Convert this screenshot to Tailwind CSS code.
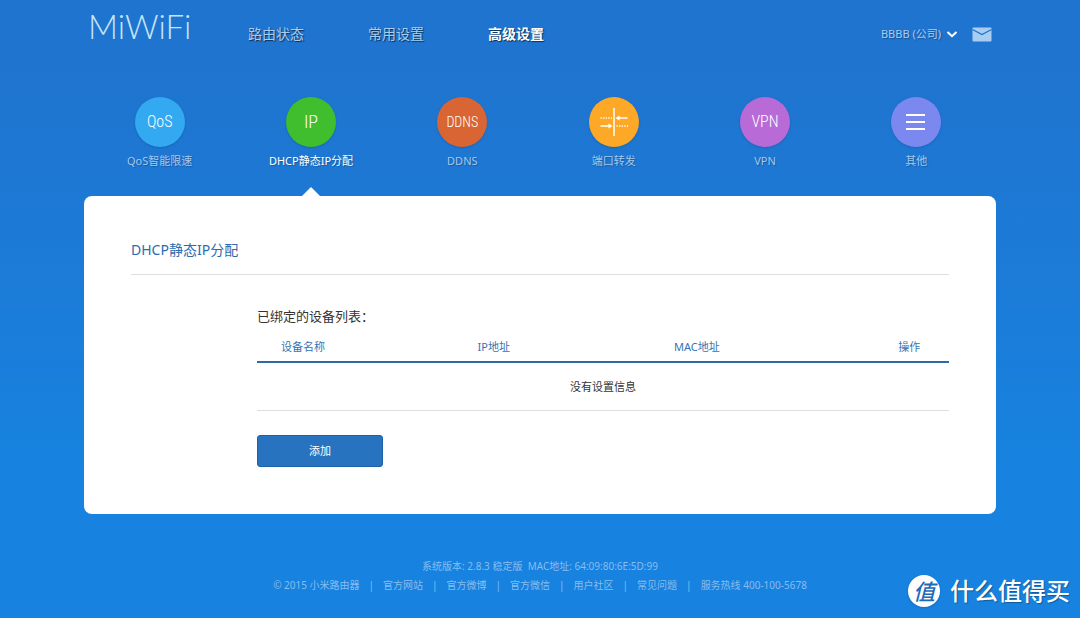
<!DOCTYPE html>
<html lang="zh-CN">
<head>
<meta charset="utf-8">
<meta name="viewport" content="width=device-width, initial-scale=1">
<title>MiWiFi</title>
<script src="https://cdn.jsdelivr.net/npm/@tailwindcss/browser@4"></script>
</head>
<body class="relative min-h-screen bg-linear-to-b from-[#1f74cf] from-10% to-[#1782df] to-75% font-['Noto_Sans','Noto_Sans_CJK_SC',sans-serif] text-[11px] text-[#333]">
<div class="mx-auto w-full max-w-[912px]">
  <header class="flex h-[70px] items-center justify-between px-1 pb-0.5">
    <div class="flex items-center">
      <a href="#" aria-label="MiWiFi" class="-mt-4 w-40 font-['Lato','Inter',sans-serif] text-[33px] leading-none font-light text-[#c4e6f8]">MiWiFi</a>
      <nav class="flex gap-16 text-sm text-[#a9cdf1] text-shadow-[1px_1px_1px_rgb(0_0_0/0.6)]">
        <a href="#">路由状态</a>
        <a href="#">常用设置</a>
        <a href="#" class="font-bold text-white">高级设置</a>
      </nav>
    </div>
    <div class="flex items-center gap-3.5">
      <button type="button" class="flex items-center gap-[5px] text-[#a9cdf1] text-shadow-[1px_1px_1px_rgb(0_0_0/0.3)]">
        BBBB (公司)
        <svg class="size-3" viewBox="0 0 12 12" fill="none" stroke="#fff" stroke-width="2"><path d="M1.500 4 6 8.200 10.500 4"/></svg>
      </button>
      <a href="#" aria-label="消息">
        <svg class="h-[15px] w-5" viewBox="0 0 20 15"><path fill="#a9cdf1" d="M.5 1.500Q.5.500 1.500.500h17Q19.500.500 19.500 1.500v12q0 1-1 1h-17q-1 0-1-1z"/><path fill="none" stroke="#1f74cf" stroke-width="1.300" d="M.5 2.500 10 7.500l9.500-5"/></svg>
      </a>
    </div>
  </header>

  <nav class="grid h-[126px] grid-cols-6 pt-[27px] pr-1 text-center text-[#a3c8ee] text-shadow-[1px_1px_1px_rgb(0_0_0/0.25)]">
    <a href="#" class="flex flex-col items-center gap-1.5">
      <span class="flex size-[50px] items-center justify-center rounded-full bg-[#32a9f0] font-['Roboto_Condensed','Open_Sans_Condensed','Liberation_Sans_Narrow',sans-serif] text-base font-light text-white shadow-sm text-shadow-none">QoS</span>
      <span>QoS智能限速</span>
    </a>
    <a href="#" aria-current="page" class="relative flex flex-col items-center gap-1.5 text-white">
      <span class="flex size-[50px] items-center justify-center rounded-full bg-[#40be2d] font-['Roboto_Condensed','Open_Sans_Condensed','Liberation_Sans_Narrow',sans-serif] text-lg font-light text-white shadow-sm text-shadow-none">IP</span>
      <span>DHCP静态IP分配</span>
      <svg class="absolute bottom-0 left-1/2 h-[9px] w-[18px] -translate-x-1/2" viewBox="0 0 18 9" fill="#fff"><path d="M0 9 9 0l9 9z"/></svg>
    </a>
    <a href="#" class="flex flex-col items-center gap-1.5">
      <span class="flex size-[50px] items-center justify-center rounded-full bg-[#d86533] font-['Roboto_Condensed','Open_Sans_Condensed','Liberation_Sans_Narrow',sans-serif] text-sm font-light text-white shadow-sm text-shadow-none">DDNS</span>
      <span>DDNS</span>
    </a>
    <a href="#" class="flex flex-col items-center gap-1.5">
      <span class="flex size-[50px] items-center justify-center rounded-full bg-[#fea827] shadow-sm">
        <svg class="size-[30px]" viewBox="0 0 30 30" fill="none" stroke="#fff" stroke-width="1.300">
          <path d="M15 1v28" stroke-width="1.500"/>
          <path d="M1.500 11H13M17.500 19H29" stroke-dasharray="1.300 1.300"/>
          <path d="M19 11h9.500M1.500 19H11"/>
          <path d="M16.500 11l4-2.500v5zM13.500 19l-4-2.500v5z" fill="#fff" stroke="none"/>
        </svg>
      </span>
      <span>端口转发</span>
    </a>
    <a href="#" class="flex flex-col items-center gap-1.5">
      <span class="flex size-[50px] items-center justify-center rounded-full bg-[#b86ad6] font-['Roboto_Condensed','Open_Sans_Condensed','Liberation_Sans_Narrow',sans-serif] text-base font-light text-white shadow-sm text-shadow-none">VPN</span>
      <span>VPN</span>
    </a>
    <a href="#" class="flex flex-col items-center gap-1.5">
      <span class="flex size-[50px] items-center justify-center rounded-full bg-[#7b88f0] shadow-sm">
        <svg class="size-5" viewBox="0 0 20 20" stroke="#fff" stroke-width="2"><path d="M0 3h19M0 10h19M0 17h19"/></svg>
      </span>
      <span>其他</span>
    </a>
  </nav>

  <main class="rounded-lg bg-white px-[47px] pt-[42px] pb-[47px]">
    <h1 class="border-b border-[#ddd] pb-3 text-sm leading-6 text-[#2a6cb0]">DHCP静态IP分配</h1>
    <section class="pt-[31px] pl-[126px]">
      <h2 class="text-[13px] leading-5">已绑定的设备列表：</h2>
      <table class="w-full table-fixed border-collapse text-left">
        <thead>
          <tr class="h-9 border-b-2 border-[#2b6ba8] text-[#3673b3]">
            <th class="w-[28.400%] pt-2 pl-6 font-normal">设备名称</th>
            <th class="w-[28.400%] pt-2 pl-6 font-normal">IP地址</th>
            <th class="w-[32.400%] pt-2 pl-6 font-normal">MAC地址</th>
            <th class="pt-2 pl-6 font-normal">操作</th>
          </tr>
        </thead>
        <tbody>
          <tr class="h-12 border-b border-[#ddd]"><td colspan="4" class="pt-0.5 text-center">没有设置信息</td></tr>
        </tbody>
      </table>
      <button type="button" class="mt-6 h-8 w-[126px] rounded-[3px] border border-[#1d62a8] bg-[#2773c0] pt-0.5 text-white">添加</button>
    </section>
  </main>

  <footer class="pt-[43px] text-center text-[10px] leading-[19px] text-[#86bdf0]">
    <p>系统版本: 2.8.3 稳定版&nbsp; MAC地址: 64:09:80:6E:5D:99</p>
    <p class="flex justify-center gap-[9px]">
      <span>© 2015 小米路由器</span><span>|</span>
      <a href="#">官方网站</a><span>|</span>
      <a href="#">官方微博</a><span>|</span>
      <a href="#">官方微信</a><span>|</span>
      <a href="#">用户社区</a><span>|</span>
      <a href="#">常见问题</a><span>|</span>
      <span>服务热线 400-100-5678</span>
    </p>
  </footer>
</div>

<div class="absolute right-2.5 bottom-[11px] flex items-center gap-2.5 text-white text-shadow-[1px_1px_1px_rgb(0_0_0/0.3)]">
  <span class="flex size-8 items-center justify-center rounded-full bg-white text-[22px] font-medium text-[#1c6cb8] italic shadow-sm text-shadow-none">值</span>
  <span class="text-2xl font-medium">什么值得买</span>
</div>
</body>
</html>
